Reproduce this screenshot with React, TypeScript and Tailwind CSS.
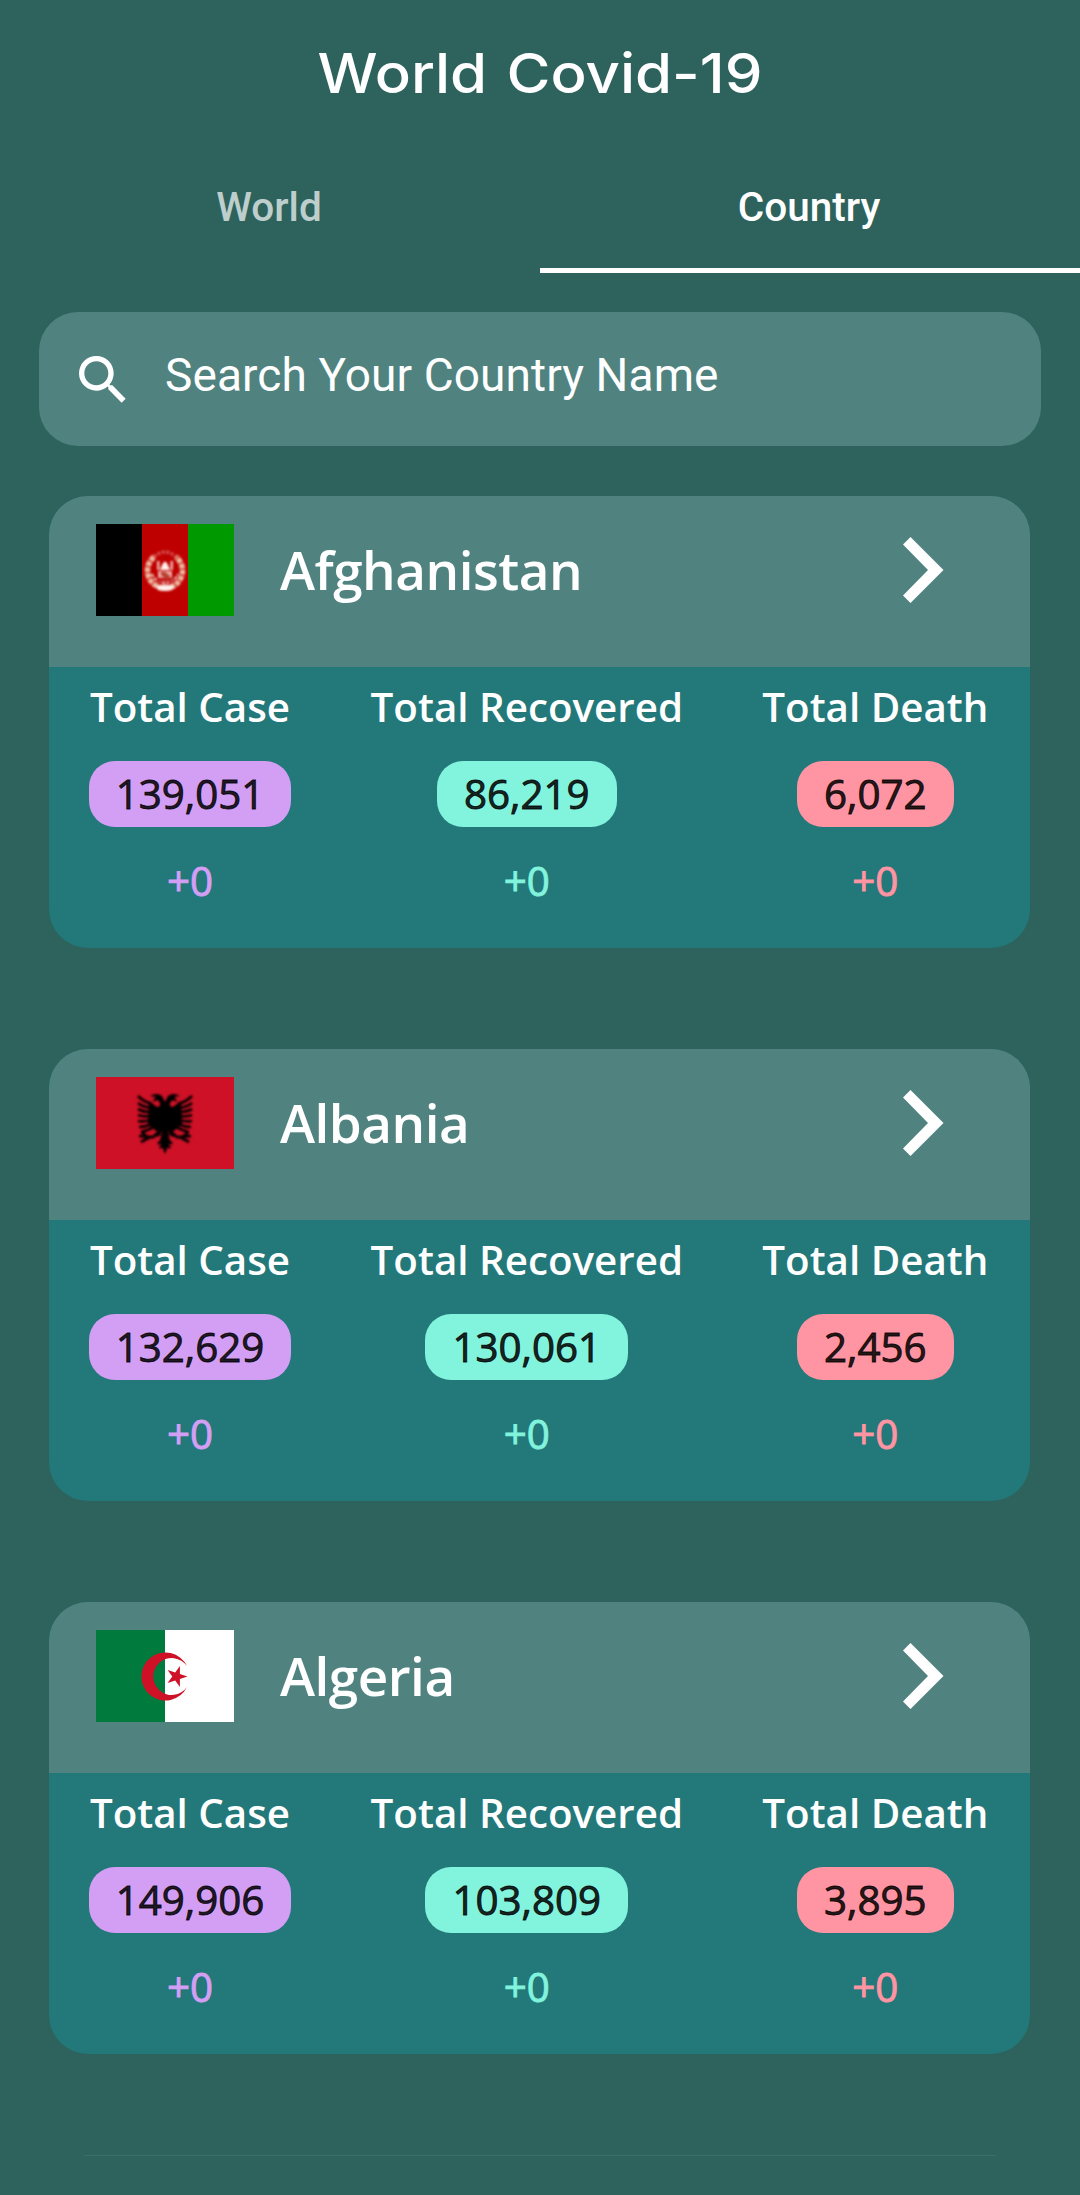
import React from "react";

type Country = { name: string; flag: React.ReactNode; cases: string; recovered: string; deaths: string };

const AfghanFlag = () => (
  <svg viewBox="0 0 138 92" className="h-[92px] w-[138px]">
    <rect width="46" height="92" fill="#000" />
    <rect x="46" width="46" height="92" fill="#bf0000" />
    <rect x="92" width="46" height="92" fill="#009a00" />
    <g className="blur-[0.9px]">
      <g fill="none" stroke="#eeb8a0">
        <path d="M58 33 A17.500 17.500 0 1 0 80 33" strokeWidth="5.500" strokeDasharray="5 1" />
        <path d="M58 33 Q69 23 80 33" stroke="#d85050" strokeWidth="3.500" strokeDasharray="3 1.5" />
        <path d="M56 50 A14 14 0 0 0 82 50" stroke="#f7dcd0" strokeWidth="2" strokeDasharray="3 1.5" />
      </g>
      <g fill="#fff0ea">
        <path d="M66 41 Q69 34 72 41 L74 46 H64Z" />
        <path d="M61 37h2.500v9H61zM74.500 37H77v9h-2.500z" opacity=".75" />
        <path d="M62 47H76V54H62z" opacity=".7" />
        <path d="M60 62Q69 59 78 62L76 66Q69 68 62 66Z" />
      </g>
      <path d="M65 48h4l5 4v3h-4l-5-4z" fill="#b84030" />
      <path d="M61 58Q69 55 77 58" stroke="#c92d2d" strokeWidth="2.500" fill="none" />
    </g>
  </svg>
);

const AlbanianFlag = () => (
  <svg viewBox="0 0 138 92" className="h-[92px] w-[138px]">
    <rect width="138" height="92" fill="#ce1126" />
    <g className="blur-[0.8px]">
      <path
        d="M69 25 L66 19 Q61 15 54 19 L60 20 Q57 22 57 25 L61 23 Q65 25 64 29 L61 30 L53 24 L52 47 L60 54 L66 55 L64 64 L69 77 L74 64 L72 55 L78 54 L86 47 L85 24 L77 30 L74 29 Q73 25 77 23 L81 25 Q81 22 78 20 L84 19 Q77 15 72 19Z"
        fill="#000"
      />
      <g stroke="#000" strokeWidth="2.700" fill="none">
        <path d="M56 27Q48 25 42 19M55 31Q47 30 42 26M55 35Q47 35 42 32M55 39Q47 40 42 38M55 43Q48 45 42 44M56 47Q49 50 43 50M59 49Q51 54 45 55" />
        <path d="M82 27Q90 25 96 19M83 31Q91 30 96 26M83 35Q91 35 96 32M83 39Q91 40 96 38M83 43Q90 45 96 44M82 47Q89 50 95 50M79 49Q87 54 93 55" />
        <path d="M65 53L57 60L43 59M54 60L45 65M52 60L46 56M65 56L60 59" />
        <path d="M73 53L81 60L95 59M84 60L93 65M86 60L92 56M73 56L78 59" />
        <path d="M62 67L69 61L76 67M64 71L69 65L74 71" />
      </g>
    </g>
  </svg>
);

const AlgerianFlag = () => (
  <svg viewBox="0 0 138 92" className="h-[92px] w-[138px]">
    <rect width="69" height="92" fill="#007a3d" />
    <rect x="69" width="69" height="92" fill="#fff" />
    <g className="blur-[0.6px]" fill="#ce1126">
      <path d="M91 36 A24 24 0 1 0 91 57 A18.500 18.500 0 1 1 91 36Z" />
      <path d="M91.500 46.500L83.900 49L83.900 57L79.200 50.500L71.600 53L76.300 46.500L71.600 40L79.200 42.500L83.900 36L83.900 44Z" />
    </g>
  </svg>
);

const countries: Country[] = [
  { name: "Afghanistan", flag: <AfghanFlag />, cases: "139,051", recovered: "86,219", deaths: "6,072" },
  { name: "Albania", flag: <AlbanianFlag />, cases: "132,629", recovered: "130,061", deaths: "2,456" },
  { name: "Algeria", flag: <AlgerianFlag />, cases: "149,906", recovered: "103,809", deaths: "3,895" },
];

function Stat({ label, value, pill, tint }: { label: string; value: string; pill: string; tint: string }) {
  return (
    <div className="flex flex-col items-center text-[40.300px] leading-[54px]">
      <div className="font-semibold whitespace-nowrap text-white">{label}</div>
      <div className={`mt-[27px] h-[66px] rounded-[26px] px-[27px] leading-[66px] text-black/87 [-webkit-text-stroke:0.9px] ${pill}`}>
        {value}
      </div>
      <div className={`mt-[27px] [-webkit-text-stroke:0.9px] ${tint}`}>+0</div>
    </div>
  );
}

function Card({ c }: { c: Country }) {
  return (
    <article className="h-[452px] overflow-hidden rounded-[39px] bg-[#23787a]">
      <header className="flex h-[171px] items-start bg-[#508380] pl-[47px] pt-[28px]">
        {c.flag}
        <h2 className="ml-[46px] flex-1 text-[53px] leading-[92px] font-semibold tracking-[-0.500px] text-white">{c.name}</h2>
        <svg viewBox="0 0 42 66" className="mr-[86px] mt-[13px] h-[66px] w-[42px]" fill="#fff">
          <path d="M8.500 0L41.500 33L8.500 66L1 58.500L26 33L1 7.500Z" />
        </svg>
      </header>
      <div className="flex justify-around pt-[13px] pr-[2px]">
        <Stat label="Total Case" value={c.cases} pill="bg-[#d39ff4]" tint="text-[#d39ff4]" />
        <Stat label="Total Recovered" value={c.recovered} pill="bg-[#82f3dc]" tint="text-[#82f3dc]" />
        <Stat label="Total Death" value={c.deaths} pill="bg-[#ff94a3]" tint="text-[#ff94a3]" />
      </div>
    </article>
  );
}

export default function App() {
  return (
    <main className="h-[2195px] w-[1080px] overflow-hidden bg-[#2d635c] font-['Open_Sans',sans-serif]">
      <h1 className="h-[146px] scale-x-[1.09] pt-[35px] text-center font-['Inter',sans-serif] text-[55px] leading-[76px] font-medium text-white [word-spacing:3px]">
        World Covid-19
      </h1>
      <nav className="grid h-[127px] grid-cols-2 text-center font-['Roboto',sans-serif] text-[40.500px] font-medium text-white">
        <div className="pt-[37px] pr-[2px] leading-[48px] text-white/70">World</div>
        <div className="border-b-[5px] border-white pt-[37px] pr-[2px] leading-[48px]">Country</div>
      </nav>
      <div className="mx-[39px] mt-[39px] flex h-[134px] items-start rounded-[39px] bg-[#508380] pl-[32px] font-['Roboto',sans-serif] text-white">
        <svg viewBox="0 0 24 24" className="mt-[36px] size-16" fill="currentColor">
          <path d="M15.500 14h-.79l-.28-.27A6.471 6.471 0 0 0 16 9.500 6.500 6.500 0 1 0 9.500 16c1.610 0 3.090-.59 4.230-1.570l.27.28v.79l5 4.990L20.490 19l-4.990-5zm-6 0C7.010 14 5 11.990 5 9.500S7.010 5 9.500 5 14 7.010 14 9.500 11.990 14 9.500 14z" />
        </svg>
        <span className="ml-[30px] mt-[36px] text-[46px] leading-[54px] tracking-[0.100px]">Search Your Country Name</span>
      </div>
      <section className="mx-[49px] mt-[50px] flex flex-col gap-[101px] pr-px">
        {countries.map((c) => (
          <Card key={c.name} c={c} />
        ))}
      </section>
      <div className="mx-[84px] mt-[101px] h-px bg-[#3b706a]" />
    </main>
  );
}
